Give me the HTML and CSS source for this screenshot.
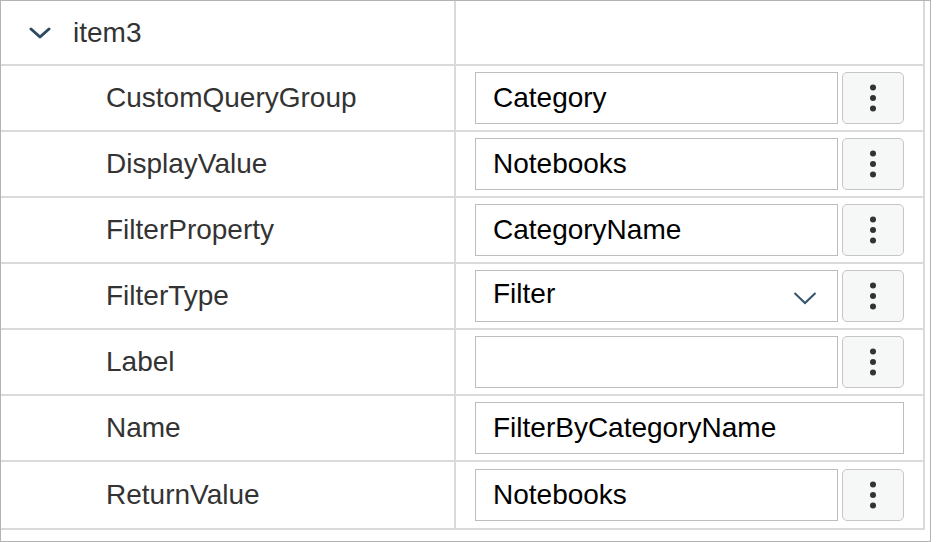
FILE: index.html
```html
<!DOCTYPE html>
<html lang="en">
<head>
  <meta charset="UTF-8" />
  <title>Property Grid</title>
  <link rel="stylesheet" href="styles.css">
</head>
<body>

  <div class="grid-frame">
    <div class="prop-grid">

      <div class="prop-row group-row">
        <div class="prop-name">
          <svg class="group-chevron" width="22" height="12" viewBox="0 0 22 12">
            <path d="M2 2 L11 10 L20 2" fill="none" stroke="#2e4a62" stroke-width="3" stroke-linecap="round" stroke-linejoin="round"/>
          </svg>
          <span>item3</span>
        </div>
        <div class="prop-value"></div>
      </div>

      <div class="prop-row">
        <div class="prop-name indent">CustomQueryGroup</div>
        <div class="prop-value">
          <div class="editor">Category</div>
          <button class="btn-more"><span class="dots"></span></button>
        </div>
      </div>

      <div class="prop-row">
        <div class="prop-name indent">DisplayValue</div>
        <div class="prop-value">
          <div class="editor">Notebooks</div>
          <button class="btn-more"><span class="dots"></span></button>
        </div>
      </div>

      <div class="prop-row">
        <div class="prop-name indent">FilterProperty</div>
        <div class="prop-value">
          <div class="editor">CategoryName</div>
          <button class="btn-more"><span class="dots"></span></button>
        </div>
      </div>

      <div class="prop-row">
        <div class="prop-name indent">FilterType</div>
        <div class="prop-value">
          <div class="editor select">
            <span class="select-text">Filter</span>
            <svg class="select-chevron" width="24" height="14" viewBox="0 0 24 14">
              <path d="M1.5 2 L12 12 L22.5 2" fill="none" stroke="#33536e" stroke-width="2"/>
            </svg>
          </div>
          <button class="btn-more"><span class="dots"></span></button>
        </div>
      </div>

      <div class="prop-row">
        <div class="prop-name indent">Label</div>
        <div class="prop-value">
          <div class="editor"></div>
          <button class="btn-more"><span class="dots"></span></button>
        </div>
      </div>

      <div class="prop-row">
        <div class="prop-name indent">Name</div>
        <div class="prop-value">
          <div class="editor">FilterByCategoryName</div>
        </div>
      </div>

      <div class="prop-row">
        <div class="prop-name indent">ReturnValue</div>
        <div class="prop-value">
          <div class="editor">Notebooks</div>
          <button class="btn-more"><span class="dots"></span></button>
        </div>
      </div>

    </div>
  </div>

</body>
</html>
```

FILE: styles.css
```css
* {
  box-sizing: border-box;
}

body {
  margin: 0;
  padding: 0;
  background: #fff;
  font-family: 'Liberation Sans', Arial, sans-serif;
}

.grid-frame {
  width: 931px;
  height: 542px;
  border: 1px solid #b3b3b3;
  padding: 0 5px 0 0;
}

.prop-grid {
  border-right: 2px solid #dadada;
  border-bottom: 2px solid #dadada;
}

.prop-row {
  display: flex;
  height: 66px;
  border-bottom: 2px solid #dadada;
}

.prop-row.group-row {
  height: 65px;
}

.prop-row:last-child {
  border-bottom: none;
}

.prop-name {
  width: 455px;
  flex-shrink: 0;
  border-right: 2px solid #dadada;
  display: flex;
  align-items: center;
  font-size: 28px;
  color: #333;
}

.group-row .prop-name {
  padding-left: 28px;
  gap: 22px;
}

.prop-name.indent {
  padding-left: 105px;
}

.prop-value {
  flex: 1;
  display: flex;
  align-items: center;
  gap: 4px;
  padding: 0 19px 0 19px;
}

.editor {
  flex: 1;
  height: 52px;
  border: 1px solid #bdbdbd;
  background: #fff;
  display: flex;
  align-items: center;
  padding-left: 17px;
  font-size: 28px;
  color: #000;
}

.editor.select {
  justify-content: space-between;
  padding-right: 20px;
  padding-bottom: 4px;
}

.select-chevron {
  margin-top: 8px;
}

.btn-more {
  width: 62px;
  height: 52px;
  border: 1px solid #c6c6c6;
  border-radius: 5px;
  background: #f6f7f7;
  display: flex;
  align-items: center;
  justify-content: center;
  padding: 0;
  cursor: pointer;
}

.dots {
  width: 6px;
  height: 6px;
  border-radius: 50%;
  background: #333;
  box-shadow: 0 -10.5px 0 #333, 0 10.5px 0 #333;
}
```
